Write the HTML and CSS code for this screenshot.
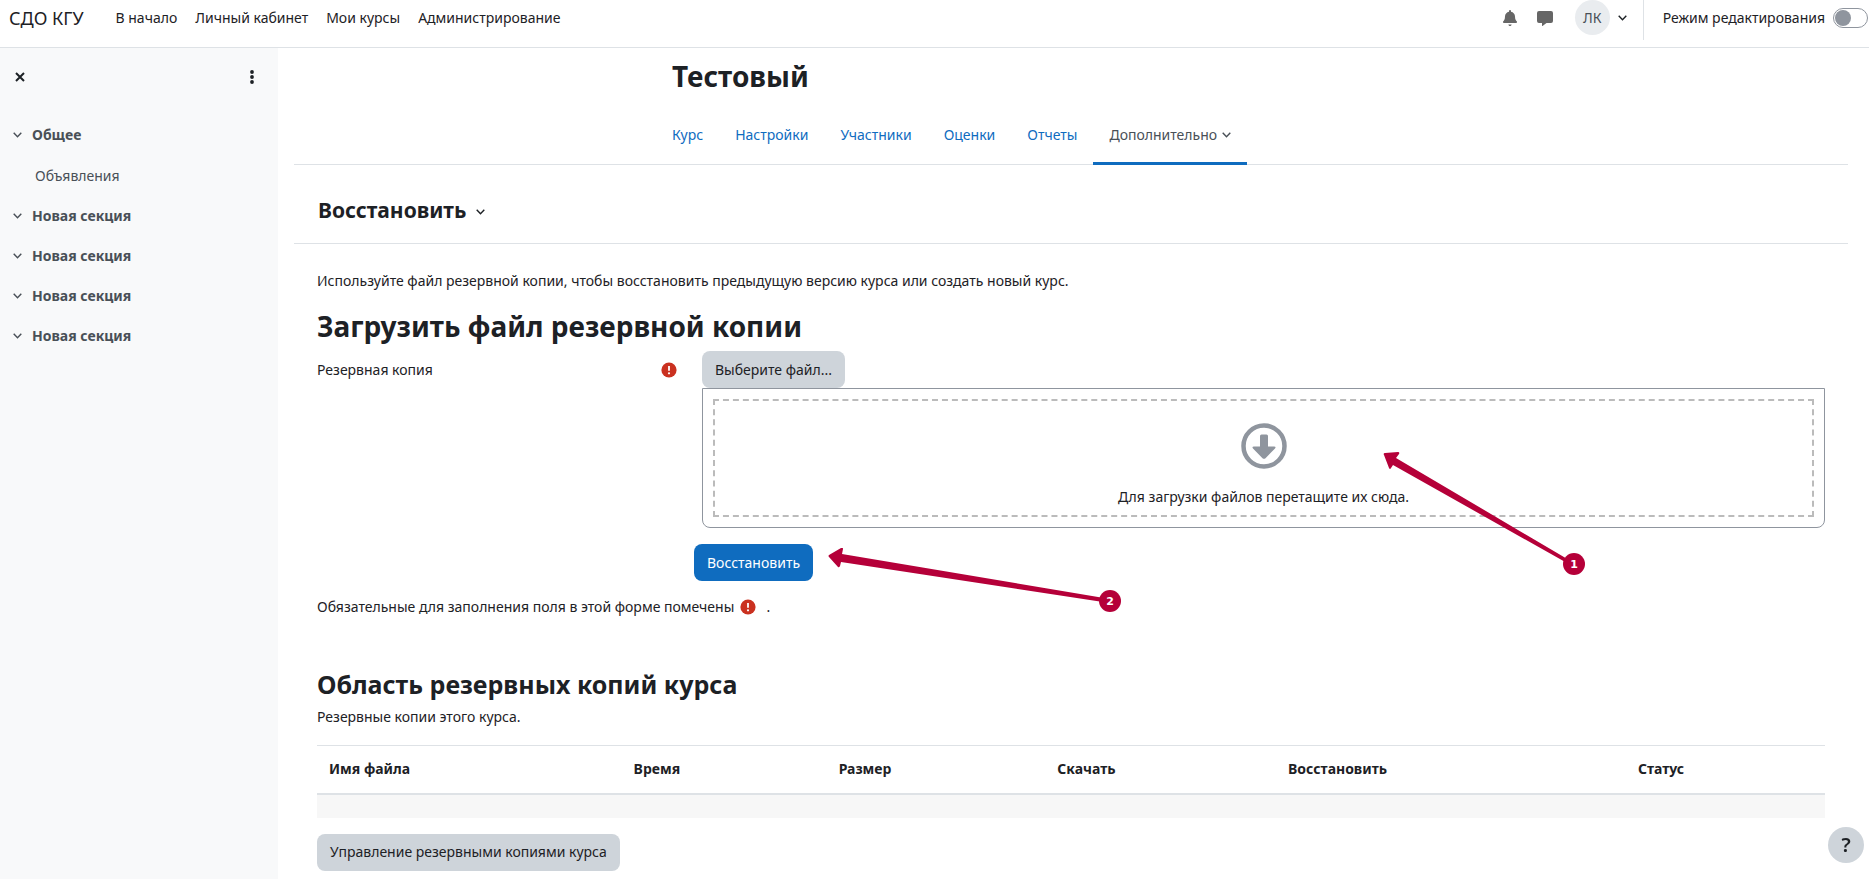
FILE: index.html
```html
<!DOCTYPE html>
<html lang="ru">
<head>
    <meta charset="UTF-8">
    <meta name="viewport" content="width=device-width, initial-scale=1.0">
    <title>Тестовый: Восстановить</title>
    <link rel="stylesheet" href="styles.css">
</head>
<body>
    <header class="navbar">
        <a class="brand" href="#">СДО КГУ</a>
        <nav class="primary-nav">
            <a href="#">В начало</a>
            <a href="#">Личный кабинет</a>
            <a href="#">Мои курсы</a>
            <a href="#">Администрирование</a>
        </nav>
        <div class="user-nav">
            <button class="icon-btn" type="button" aria-label="Уведомления">
                <svg width="14" height="16" viewBox="0 0 448 512"><path fill="#666" d="M172 464c0 28 23 48 52 48s52-20 52-48zm267-102c-19-21-55-52-55-154 0-78-54-140-128-155V32a32 32 0 1 0-64 0v21C118 68 64 130 64 208c0 102-36 133-55 154-6 6-9 14-9 22 0 16 13 32 32 32h384c19 0 32-16 32-32 0-8-3-16-9-22z"/></svg>
            </button>
            <button class="icon-btn" type="button" aria-label="Сообщения">
                <svg width="16" height="16" viewBox="0 0 16 16"><path fill="#666" d="M2 1h12q2 0 2 2v8q0 2-2 2H9.500L5.500 16q-.5.200-.5-.4V13H2q-2 0-2-2V3q0-2 2-2z"/></svg>
            </button>
            <button class="user-menu" type="button">
                <span class="avatar">ЛК</span>
                <svg class="chevron" width="9" height="6" viewBox="0 0 9 6"><path d="M.7.7l3.800 4 3.800-4"/></svg>
            </button>
            <div class="edit-mode">
                <label for="editMode">Режим редактирования</label>
                <input class="switch" type="checkbox" id="editMode">
            </div>
        </div>
    </header>

    <div class="page">
        <aside class="sidebar">
            <div class="sidebar-header">
                <button class="icon-btn" type="button" aria-label="Закрыть">
                    <svg width="10" height="10" viewBox="0 0 10 10"><path d="M1 1l8 8M9 1L1 9" stroke="#1d2125" stroke-width="2"/></svg>
                </button>
                <button class="icon-btn" type="button" aria-label="Параметры">
                    <svg width="4" height="14" viewBox="0 0 4 14" fill="#1d2125"><circle cx="2" cy="2" r="1.900"/><circle cx="2" cy="7" r="1.900"/><circle cx="2" cy="12" r="1.900"/></svg>
                </button>
            </div>
            <ul class="course-index">
                <li><a class="section" href="#"><svg class="chevron" width="9" height="6" viewBox="0 0 9 6"><path d="M.7.7l3.800 4 3.800-4"/></svg>Общее</a></li>
                <li><a class="activity" href="#">Объявления</a></li>
                <li><a class="section" href="#"><svg class="chevron" width="9" height="6" viewBox="0 0 9 6"><path d="M.7.7l3.800 4 3.800-4"/></svg>Новая секция</a></li>
                <li><a class="section" href="#"><svg class="chevron" width="9" height="6" viewBox="0 0 9 6"><path d="M.7.7l3.800 4 3.800-4"/></svg>Новая секция</a></li>
                <li><a class="section" href="#"><svg class="chevron" width="9" height="6" viewBox="0 0 9 6"><path d="M.7.7l3.800 4 3.800-4"/></svg>Новая секция</a></li>
                <li><a class="section" href="#"><svg class="chevron" width="9" height="6" viewBox="0 0 9 6"><path d="M.7.7l3.800 4 3.800-4"/></svg>Новая секция</a></li>
            </ul>
        </aside>

        <main class="main">
            <div class="course-header">
                <div class="course-header-inner">
                    <h1>Тестовый</h1>
                    <nav class="tabs">
                        <a href="#">Курс</a>
                        <a href="#">Настройки</a>
                        <a href="#">Участники</a>
                        <a href="#">Оценки</a>
                        <a href="#">Отчеты</a>
                        <a class="active" href="#">Дополнительно<svg class="chevron" width="9" height="6" viewBox="0 0 9 6"><path d="M.7.7l3.800 4 3.800-4"/></svg></a>
                    </nav>
                </div>
            </div>

            <div class="action-bar">
                <button class="action-title" type="button">Восстановить<svg class="chevron" width="9" height="6" viewBox="0 0 9 6"><path d="M.7.7l3.800 4 3.800-4"/></svg></button>
            </div>

            <div class="content">
                <p class="intro">Используйте файл резервной копии, чтобы восстановить предыдущую версию курса или создать новый курс.</p>

                <h2>Загрузить файл резервной копии</h2>
                <form class="restore-form">
                    <div class="form-row">
                        <div class="form-label">
                            <label for="chooseFile">Резервная копия</label>
                            <svg class="required" width="16" height="16" viewBox="0 0 16 16"><circle cx="8" cy="8" r="7.600" fill="#ca3120"/><path d="M8 4v4.700" stroke="#fff" stroke-width="1.800"/><circle cx="8" cy="11.300" r="1.100" fill="#fff"/></svg>
                        </div>
                        <div class="form-field">
                            <button class="btn btn-secondary" type="button" id="chooseFile">Выберите файл...</button>
                            <div class="filepicker">
                                <div class="dropzone">
                                    <svg width="46" height="46" viewBox="0 0 46 46"><circle cx="23" cy="23" r="20.500" fill="none" stroke="#8f959e" stroke-width="4.500"/><path fill="#8f959e" d="M20.500 11.500h5q1.500 0 1.500 1.500v10.500h6q2.500 0 1 2L24.500 35.200q-1.500 1.300-3 0L12 25.500q-1.500-2 1-2h6V13q0-1.500 1.500-1.500z"/></svg>
                                    <span>Для загрузки файлов перетащите их сюда.</span>
                                </div>
                                <svg class="callout callout-drop" width="204" height="124" viewBox="0 0 204 124">
                                    <path d="M1 3q-1-2 1-2L15 0q2 0 1 2l-3 4L186 108l-2 3L10 13l-2 3q-1 2-2 0z"/>
                                    <circle cx="191" cy="112" r="11"/>
                                    <text x="191" y="116">1</text>
                                </svg>
                            </div>
                        </div>
                    </div>
                    <div class="submit-row">
                        <button class="btn btn-primary" type="button">Восстановить</button>
                        <svg class="callout callout-submit" width="294" height="66" viewBox="0 0 294 66">
                            <path d="M1 9q-1-1 0-2L13 0q2-1 2 1l-1 5L276 50l-1 4L13 14l-1 4q-1 2-2 1z"/>
                            <circle cx="282" cy="53" r="11"/>
                            <text x="282" y="57">2</text>
                        </svg>
                    </div>
                    <p class="required-note">Обязательные для заполнения поля в этой форме помечены
                        <svg class="required" width="16" height="16" viewBox="0 0 16 16"><circle cx="8" cy="8" r="7.600" fill="#ca3120"/><path d="M8 4v4.700" stroke="#fff" stroke-width="1.800"/><circle cx="8" cy="11.300" r="1.100" fill="#fff"/></svg> .</p>
                </form>

                <h3>Область резервных копий курса</h3>
                <p class="area-note">Резервные копии этого курса.</p>
                <table class="backups">
                    <thead>
                        <tr>
                            <th class="col-name">Имя файла</th>
                            <th class="col-time">Время</th>
                            <th class="col-size">Размер</th>
                            <th class="col-download">Скачать</th>
                            <th class="col-restore">Восстановить</th>
                            <th class="col-status">Статус</th>
                        </tr>
                    </thead>
                    <tbody>
                        <tr><td></td><td></td><td></td><td></td><td></td><td></td></tr>
                    </tbody>
                </table>
                <button class="btn btn-secondary" type="button">Управление резервными копиями курса</button>
            </div>
        </main>
    </div>

    <button class="help" type="button" aria-label="Справка">?</button>
</body>
</html>
```
FILE: styles.css
```css
* {
    box-sizing: border-box;
}
body {
    margin: 0;
    font-family: "Segoe UI", "Noto Sans", sans-serif;
    font-size: 14px;
    line-height: 24px;
    color: #1d2125;
    background-color: #fff;
}
a {
    color: #0f6cbf;
    text-decoration: none;
}
button {
    font: inherit;
    color: inherit;
    border: none;
    background: none;
    padding: 0;
    cursor: pointer;
}
h1, h2, h3, p {
    margin: 0;
}
.chevron {
    flex: none;
    fill: none;
    stroke: currentColor;
    stroke-width: 1.4;
}

/* navbar */
.navbar {
    display: flex;
    align-items: flex-start;
    height: 48px;
    padding-left: 9px;
    border-bottom: 1px solid #dee2e6;
}
.navbar a {
    color: #1d2125;
    line-height: 36px;
}
.navbar .brand {
    font-size: 18px;
    margin-right: 32px;
}
.primary-nav {
    display: flex;
    gap: 18px;
}
.user-nav {
    display: flex;
    align-items: center;
    margin-left: auto;
}
.icon-btn {
    display: flex;
    align-items: center;
}
.user-nav .icon-btn {
    height: 36px;
    align-self: flex-start;
    margin-right: 20px;
}
.user-menu {
    display: flex;
    align-items: center;
    gap: 8px;
    margin: 0 16px 0 2px;
}
.avatar {
    width: 35px;
    height: 35px;
    line-height: 35px;
    margin-bottom: 5px;
    border-radius: 50%;
    background-color: #e9ecef;
    color: #495057;
}
.user-menu .chevron {
    margin-bottom: 4px;
}
.edit-mode {
    display: flex;
    align-items: center;
    gap: 8px;
    height: 40px;
    padding: 0 1px 4px 19px;
    border-left: 1px solid #dee2e6;
}
.switch {
    appearance: none;
    width: 35px;
    height: 20px;
    margin: 0;
    padding: 1px;
    border: 1px solid #8f959e;
    border-radius: 10px;
    background-color: #fff;
}
.switch::before {
    content: "";
    display: block;
    width: 16px;
    height: 16px;
    border-radius: 50%;
    background-color: #8f959e;
}

/* layout */
.page {
    display: flex;
    min-height: calc(100vh - 48px);
}
.sidebar {
    flex: none;
    width: 278px;
    background-color: #f8f9fa;
}
.sidebar-header {
    display: flex;
    justify-content: space-between;
    height: 58px;
    padding: 0 24px 0 15px;
}
.course-index {
    list-style: none;
    margin: 0;
    padding: 9px 0 0 13px;
}
.course-index a {
    display: flex;
    align-items: center;
    height: 40px;
    color: #495057;
}
.course-index .section {
    gap: 10px;
    font-weight: bold;
}
.course-index .activity {
    height: 41px;
    padding-left: 22px;
}
.main {
    flex: 1;
    padding: 0 21px 8px 16px;
}

/* course header */
.course-header {
    border-bottom: 1px solid #dee2e6;
}
.course-header-inner {
    max-width: 830px;
    margin: 0 auto;
    padding: 8px 16px 0;
}
h1, h2 {
    font-size: 28px;
    line-height: 40px;
}
.tabs {
    display: flex;
    margin: 8px -16px -1px;
}
.tabs a {
    display: flex;
    align-items: center;
    gap: 5px;
    height: 61px;
    padding: 3px 16px 0;
    border-bottom: 3px solid transparent;
}
.tabs .active {
    color: #495057;
    border-bottom-color: #0f6cbf;
}
.action-bar {
    padding: 30px 24px 18px;
    border-bottom: 1px solid #dee2e6;
}
.action-title {
    display: flex;
    align-items: center;
    gap: 10px;
    font-size: 21px;
    line-height: 30px;
    font-weight: bold;
}
.action-title .chevron {
    margin-top: 4px;
}
.content {
    padding: 24px 23px 0;
}
.intro {
    margin: 1px 0 13px;
}

/* form */
.form-row {
    display: flex;
    margin-top: 5px;
}
.form-label {
    display: flex;
    justify-content: space-between;
    flex: none;
    width: 385px;
    height: 37px;
    padding-right: 25px;
    align-items: center;
}
.form-field {
    flex: 1;
}
.btn {
    display: block;
    height: 37px;
    padding: 0 13px;
    border-radius: 8px;
}
.btn-secondary {
    background-color: #ced4da;
}
.btn-primary {
    background-color: #0f6cbf;
    color: #fff;
}
.filepicker {
    position: relative;
    height: 140px;
    padding: 10px;
    border: 1px solid #8f959e;
    border-radius: 0 0 8px 8px;
}
.dropzone {
    display: flex;
    flex-direction: column;
    align-items: center;
    justify-content: flex-end;
    gap: 16px;
    height: 100%;
    padding-bottom: 6px;
    border: 2px dashed #bbb;
}
.submit-row {
    position: relative;
    margin: 16px 0 14px 377px;
}
.required-note .required {
    vertical-align: middle;
    margin: 0 7px 2px 2px;
}

/* numbered pointers */
.callout {
    position: absolute;
    fill: #b50039;
    pointer-events: none;
}
.callout text {
    fill: #fff;
    font: bold 11px "DejaVu Sans", sans-serif;
    text-anchor: middle;
}
.callout-drop {
    left: calc(50% + 119px);
    top: 63px;
}
.callout-submit {
    left: 134px;
    top: 4px;
}

/* backups */
h3 {
    margin-top: 49px;
    font-size: 25px;
    line-height: 32px;
}
.area-note {
    margin: 5px 0 16px;
}
.backups {
    width: 100%;
    table-layout: fixed;
    border-collapse: collapse;
    margin-bottom: 16px;
}
.backups th {
    height: 48px;
    padding: 0 12px;
    text-align: left;
    border-top: 1px solid #dee2e6;
    border-bottom: 2px solid #dee2e6;
}
.backups td {
    height: 24px;
    padding: 0;
    background-color: #f7f7f7;
}
.col-name { width: 20.2%; }
.col-time { width: 13.6%; }
.col-size { width: 14.5%; }
.col-download { width: 15.3%; }
.col-restore { width: 23.2%; }
.col-status { width: 13.2%; }

.help {
    position: fixed;
    right: 5px;
    bottom: 16px;
    width: 36px;
    height: 36px;
    border-radius: 50%;
    background-color: #ced4da;
    font-size: 20px;
    font-weight: 600;
}
```
